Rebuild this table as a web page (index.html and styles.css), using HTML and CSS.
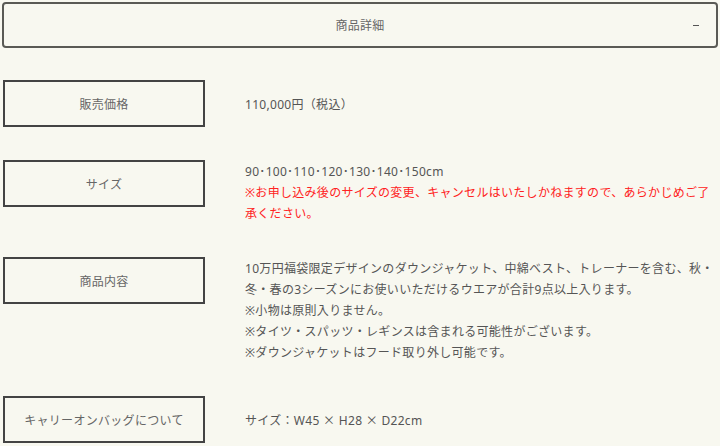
FILE: index.html
```html
<!DOCTYPE html>
<html lang="ja">
<head>
    <meta charset="UTF-8">
    <meta name="viewport" content="width=device-width, initial-scale=1.0">
    <title>商品詳細</title>
    <link rel="stylesheet" href="styles.css">
</head>
<body>
    <div class="detail">
        <div class="detail-head">
            <span class="detail-title">商品詳細</span>
            <span class="detail-toggle"></span>
        </div>

        <div class="detail-body">
            <div class="row row-single">
                <div class="row-label">販売価格</div>
                <div class="row-value">110,000円（税込）</div>
            </div>

            <div class="row">
                <div class="row-label">サイズ</div>
                <div class="row-value">
                    90･100･110･120･130･140･150cm<br>
                    <span class="note">※お申し込み後のサイズの変更、キャンセルはいたしかねますので、あらかじめご了承ください。</span>
                </div>
            </div>

            <div class="row">
                <div class="row-label">商品内容</div>
                <div class="row-value">
                    10万円福袋限定デザインのダウンジャケット、中綿ベスト、トレーナーを含む、秋・冬・春の3シーズンにお使いいただけるウエアが合計9点以上入ります。<br>
                    ※小物は原則入りません。<br>
                    ※タイツ・スパッツ・レギンスは含まれる可能性がございます。<br>
                    ※ダウンジャケットはフード取り外し可能です。
                </div>
            </div>

            <div class="row row-single">
                <div class="row-label">キャリーオンバッグについて</div>
                <div class="row-value">サイズ：W45 <span class="times">×</span> H28 <span class="times">×</span> D22cm</div>
            </div>
        </div>
    </div>
</body>
</html>
```

FILE: styles.css
```css
body {
    margin: 0;
    padding: 2px 2px 0;
    background-color: #f8f8f0;
    font-family: "Noto Sans", "Noto Sans CJK JP", sans-serif;
    font-size: 12px;
    letter-spacing: 0.3px;
    color: #555;
}
.detail-head {
    position: relative;
    height: 42px;
    border: 2px solid #5a5a55;
    border-radius: 4px;
    display: flex;
    align-items: center;
    justify-content: center;
}
.detail-title {
    color: #666;
}
/* small dash for the open state */
.detail-toggle {
    position: absolute;
    right: 17px;
    top: 21px;
    width: 6px;
    height: 1px;
    background-color: #555;
}
.detail-body {
    padding: 32px 0 0 1px;
}
.row {
    display: flex;
    align-items: flex-start;
    gap: 40px;
    margin-bottom: 33px;
}
.row-single {
    align-items: center;
}
.row-label {
    flex: 0 0 auto;
    width: 198px;
    height: 43px;
    border: 2px solid #444;
    display: flex;
    align-items: center;
    justify-content: center;
    color: #666;
}
.row-value {
    flex: 1;
    line-height: 21px;
    padding: 1px 2px 0 0;
}
.note {
    color: #f22;
}
.times {
    font-family: "Noto Sans CJK JP", sans-serif;
}
```
